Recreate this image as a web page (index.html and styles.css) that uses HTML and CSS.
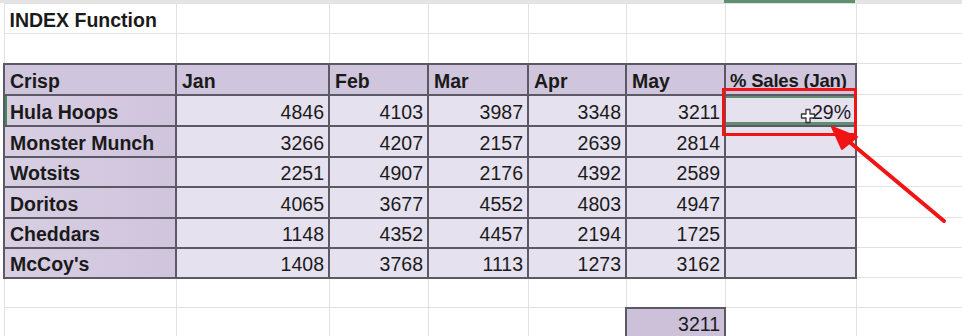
FILE: index.html
```html
<!DOCTYPE html>
<html>
<head>
<meta charset="utf-8">
<link rel="stylesheet" href="styles.css">
</head>
<body>
<div class="sheet">
  <div class="colbar"><span class="colbar-sel"></span></div>
  <table class="grid">
    <colgroup>
      <col class="c-a"><col class="c-b"><col class="c-c"><col class="c-d"><col class="c-e"><col class="c-f"><col class="c-g"><col class="c-h">
    </colgroup>
    <tr class="r30"><td class="title">INDEX Function</td><td></td><td></td><td></td><td></td><td></td><td></td><td></td></tr>
    <tr class="r30"><td></td><td></td><td></td><td></td><td></td><td></td><td></td><td></td></tr>
    <tr class="r31"><td class="t hd">Crisp</td><td class="t hd">Jan</td><td class="t hd">Feb</td><td class="t hd">Mar</td><td class="t hd">Apr</td><td class="t hd">May</td><td class="t hd tight">% Sales (Jan)</td><td></td></tr>
    <tr class="r31"><td class="t nm rowsel">Hula Hoops</td><td class="t n">4846</td><td class="t n">4103</td><td class="t n">3987</td><td class="t n">3348</td><td class="t n">3211</td><td class="t n sel">29%</td><td></td></tr>
    <tr class="r31"><td class="t nm">Monster Munch</td><td class="t n">3266</td><td class="t n">4207</td><td class="t n">2157</td><td class="t n">2639</td><td class="t n">2814</td><td class="t n"></td><td></td></tr>
    <tr class="r30"><td class="t nm">Wotsits</td><td class="t n">2251</td><td class="t n">4907</td><td class="t n">2176</td><td class="t n">4392</td><td class="t n">2589</td><td class="t n"></td><td></td></tr>
    <tr class="r31"><td class="t nm">Doritos</td><td class="t n">4065</td><td class="t n">3677</td><td class="t n">4552</td><td class="t n">4803</td><td class="t n">4947</td><td class="t n"></td><td></td></tr>
    <tr class="r30"><td class="t nm">Cheddars</td><td class="t n">1148</td><td class="t n">4352</td><td class="t n">4457</td><td class="t n">2194</td><td class="t n">1725</td><td class="t n"></td><td></td></tr>
    <tr class="r30"><td class="t nm">McCoy's</td><td class="t n">1408</td><td class="t n">3768</td><td class="t n">1113</td><td class="t n">1273</td><td class="t n">3162</td><td class="t n"></td><td></td></tr>
    <tr class="r30"><td></td><td></td><td></td><td></td><td></td><td></td><td></td><td></td></tr>
    <tr class="r30"><td></td><td></td><td></td><td></td><td></td><td class="t res">3211</td><td></td><td></td></tr>
  </table>

  <svg class="cursor" width="16" height="16" viewBox="0 0 16 16">
    <path d="M6 1.5h4v4.5h4.5v4H10v4.5H6V10H1.5V6H6z" fill="#fff" stroke="#333" stroke-width="1.3" stroke-linejoin="round"/>
  </svg>
  <div class="callout"></div>
  <svg class="arrow" width="962" height="336" viewBox="0 0 962 336">
    <line x1="944" y1="221" x2="840" y2="134" stroke="#f01414" stroke-width="4" stroke-linecap="round"/>
    <path d="M832 127 L857 137 L842 149 Z" fill="#f01414" stroke="#f01414" stroke-width="2" stroke-linejoin="round"/>
  </svg>
</div>
</body>
</html>
```

FILE: styles.css
```css
html, body {
  margin: 0;
  padding: 0;
  background: #ffffff;
  overflow: hidden;
}

.sheet {
  position: relative;
  width: 962px;
  height: 336px;
  overflow: hidden;
  font-family: "Liberation Sans", Arial, sans-serif;
  font-size: 19.5px;
  color: #1a1a1a;
}

.colbar {
  height: 3px;
  background: #e4e4e4;
  display: flex;
  padding-left: 724px;
}

.colbar-sel {
  width: 131px;
  height: 3px;
  background: #5f8f6e;
}

.grid {
  border-collapse: collapse;
  table-layout: fixed;
  margin-left: 3px;
  width: 959px;
}

.c-a { width: 172px; }
.c-b { width: 153px; }
.c-c { width: 99px; }
.c-d { width: 100px; }
.c-e { width: 98px; }
.c-f { width: 99px; }
.c-g { width: 131px; }
.c-h { width: 107px; }

.grid td {
  border: 1px solid #e1e1e1;
  padding: 0 4px 2px 5px;
  vertical-align: bottom;
  white-space: nowrap;
  overflow: visible;
  line-height: 22px;
}

.grid tr td:last-child {
  border-right: none;
}

.r30 { height: 30px; }
.r31 { height: 31px; }

.grid td.t {
  border: 2px solid #5b5963;
}

.title {
  font-weight: bold;
}

.hd {
  font-weight: bold;
  background: #cfc5dc;
  text-align: left;
}

.grid td.tight {
  font-size: 18.5px;
  letter-spacing: -0.2px;
  padding-left: 4px;
}

.nm {
  font-weight: bold;
  background: linear-gradient(90deg, #d8cfe3 0%, #d0c4dd 100%);
}

.rowsel {
  box-shadow: inset 2px 0 0 #3f8a5a;
}

.n {
  text-align: right;
  background: #e6e1ef;
}

.res {
  text-align: right;
  background: #cdc1da;
}

.sel {
  box-shadow: inset 0 2px 0 #5f8f6e, inset 0 -3px 0 #5f8f6e;
}

.cursor {
  position: absolute;
  left: 800px;
  top: 108px;
}

.callout {
  position: absolute;
  left: 722px;
  top: 88px;
  width: 129px;
  height: 42px;
  border: 3px solid #f01414;
}

.arrow {
  position: absolute;
  left: 0;
  top: 0;
  pointer-events: none;
}
```
